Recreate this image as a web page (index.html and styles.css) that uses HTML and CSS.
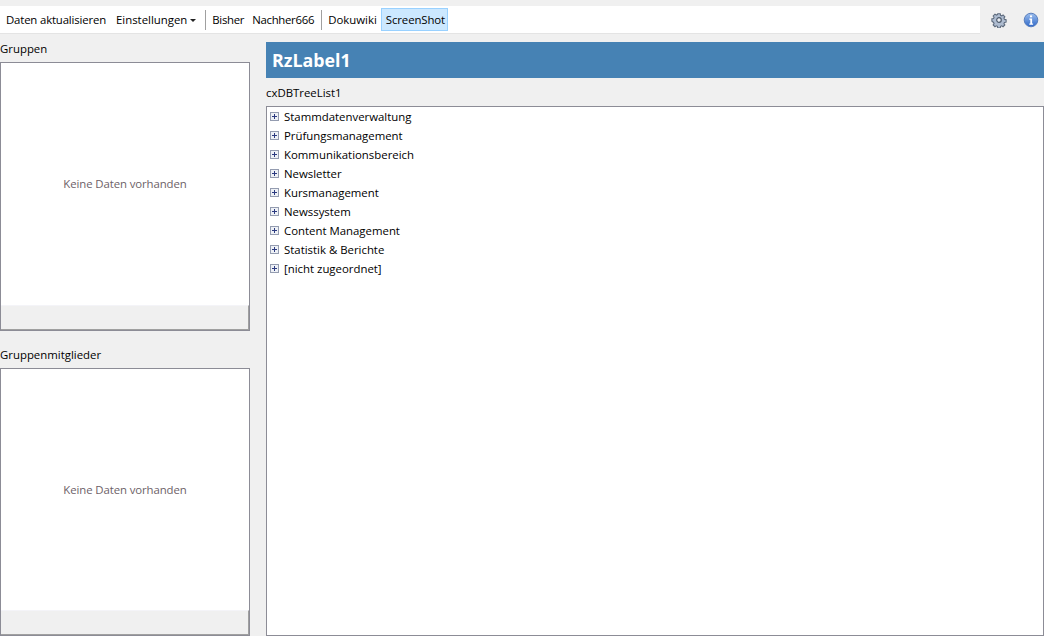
FILE: index.html
```html
<!DOCTYPE html>
<html lang="de">
<head>
<meta charset="utf-8">
<title>RzLabel1</title>
<link rel="stylesheet" href="styles.css">
</head>
<body>
<div class="app">
  <header class="topbar">
    <nav class="toolbar">
      <span class="tool snug">Daten aktualisieren</span>
      <span class="tool menu">Einstellungen <i class="caret"></i></span>
      <span class="sep"></span>
      <span class="tool snugger short">Bisher</span>
      <span class="tool snugger">Nachher666</span>
      <span class="sep wide"></span>
      <span class="tool">Dokuwiki</span>
      <span class="tool active">ScreenShot</span>
    </nav>
    <div class="icons">
      <svg class="icon" viewBox="0 0 16 16" width="16" height="16">
        <path d="M6.6 1h2.8l.3 1.8 1.3.6 1.5-1 2 2-1 1.5.5 1.3 1.9.4v2.8l-1.9.3-.5 1.3 1 1.5-2 2-1.5-1-1.3.5-.3 1.9H6.6l-.3-1.9-1.3-.5-1.5 1-2-2 1-1.5-.5-1.3L.1 9.4V6.6L2 6.3l.5-1.3-1-1.5 2-2 1.5 1 1.3-.6z" transform="translate(.8 .8) scale(.9)" fill="#aebcd0" stroke="#5d6a7c" stroke-width="1.2"/>
        <circle cx="8" cy="8" r="2.3" fill="#e9edf2" stroke="#4f5c6e" stroke-width="1.2"/>
      </svg>
      <svg class="icon" viewBox="0 0 16 16" width="16" height="16">
        <defs><linearGradient id="blue" x1="0" y1="0" x2="0" y2="1"><stop offset="0" stop-color="#9dbfee"/><stop offset="1" stop-color="#2f68c8"/></linearGradient></defs>
        <circle cx="8" cy="8" r="6.8" fill="url(#blue)" stroke="#5a7fbc" stroke-width="1"/>
        <rect x="7" y="3.4" width="2.1" height="1.9" fill="#fff"/>
        <path d="M6.3 6.5h2.8v5h1v1.2H6.3v-1.2h1v-3.8h-1z" fill="#fff"/>
      </svg>
    </div>
  </header>
  <main class="content">
    <aside class="side">
      <section class="group first">
        <h2 class="label">Gruppen</h2>
        <div class="grid">
          <div class="empty">Keine Daten vorhanden</div>
          <div class="footer"></div>
        </div>
      </section>
      <section class="group second">
        <h2 class="label">Gruppenmitglieder</h2>
        <div class="grid">
          <div class="empty">Keine Daten vorhanden</div>
          <div class="footer"></div>
        </div>
      </section>
    </aside>
    <section class="detail">
      <h1 class="banner">RzLabel1</h1>
      <div class="treelabel">cxDBTreeList1</div>
      <ul class="tree">
        <li><i class="plus"></i>Stammdatenverwaltung</li>
        <li><i class="plus"></i>Prüfungsmanagement</li>
        <li><i class="plus"></i>Kommunikationsbereich</li>
        <li><i class="plus"></i>Newsletter</li>
        <li><i class="plus"></i>Kursmanagement</li>
        <li><i class="plus"></i>Newssystem</li>
        <li><i class="plus"></i>Content Management</li>
        <li><i class="plus"></i>Statistik &amp; Berichte</li>
        <li><i class="plus"></i>[nicht zugeordnet]</li>
      </ul>
    </section>
  </main>
</div>
</body>
</html>
```
FILE: styles.css
```css
* { box-sizing: border-box; }
html, body { margin: 0; padding: 0; height: 100%; overflow: hidden; }
body {
  background: #f0f0f0;
  color: #000;
  font: 11.4px/16px "Open Sans", "Noto Sans", sans-serif;
}
.app { width: 1044px; height: 636px; display: flex; flex-direction: column; padding-top: 6px; }
.topbar { display: flex; height: 28px; flex: none; }
.toolbar {
  width: 980px;
  background: #fff;
  border-bottom: 1px solid #e4e4e4;
  display: flex;
  align-items: center;
  padding-left: 1px;
}
.tool { padding: 0 5px; height: 22px; line-height: 22px; white-space: nowrap; }
.snug { letter-spacing: -0.17px; }
.snugger { letter-spacing: -0.3px; }
.short { padding-right: 3px; }
.menu { padding-right: 0; }
.active { background: #cce8ff; border: 1px solid #99d1ff; line-height: 21px; padding: 0 2px 0 4px; margin-left: -1px; height: 23px; letter-spacing: -0.1px; }
.caret {
  display: inline-block; width: 0; height: 0; margin: 0 8px 0 0; vertical-align: 2px;
  border-left: 3px solid transparent; border-right: 3px solid transparent; border-top: 3px solid #222;
}
.sep { width: 1px; height: 20px; background: #a0a0a0; margin: 0 1px; }
.wide { margin-left: 2px; }
.icons { flex: 1; display: flex; align-items: center; gap: 16px; padding-left: 11px; }
.icon { display: block; flex: none; }
.content { flex: 1; display: flex; min-height: 0; }
.side { width: 250px; flex: none; display: flex; flex-direction: column; }
.group { display: flex; flex-direction: column; }
.first { height: 297px; }
.second { flex: 1; margin-top: 9px; }
.label { margin: 0; font-size: inherit; font-weight: 400; line-height: 16px; height: 28px; padding-top: 7px; flex: none; }
.grid {
  flex: 1; display: flex; flex-direction: column; background: #fff;
  border: 1px solid #8c8c96;
}
.empty { flex: 1; display: flex; align-items: center; justify-content: center; color: #6d5f68; letter-spacing: -0.1px; }
.footer {
  height: 25px; flex: none; background: #f0f0f0;
  border-top: 1px solid #f4f4f8;
  border-right: 1px solid #a0a0a0;
  border-bottom: 1px solid #a0a0a0;
}
.detail { flex: 1; margin-left: 16px; display: flex; flex-direction: column; min-width: 0; padding-top: 8px; }
.banner {
  margin: 0; height: 36px; background: #4682b4; color: #fff;
  font-size: 17.8px; font-weight: 700; line-height: 36px; padding-left: 6px; flex: none;
}
.treelabel { height: 28px; padding-top: 7px; flex: none; }
.tree {
  flex: 1; margin: 0; padding: 0 0 0 3px; list-style: none; background: #fff;
  border: 1px solid #8c8c96;
}
.tree li { height: 19px; display: flex; align-items: center; }
.plus {
  width: 9px; height: 9px; margin-right: 5px; flex: none; border: 1px solid #949cb0;
  background:
    linear-gradient(#2c3a80, #2c3a80) center / 5px 1px no-repeat,
    linear-gradient(#2c3a80, #2c3a80) center / 1px 5px no-repeat,
    #eef1f6;
}
```
